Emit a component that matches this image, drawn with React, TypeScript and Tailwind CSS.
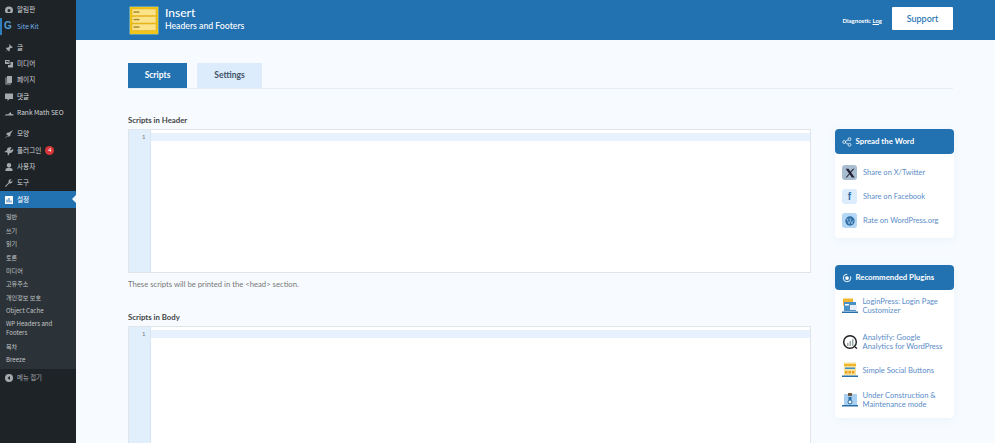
import React from "react";

const ko = { fontFamily: '"Noto Sans CJK KR","Noto Sans",sans-serif' };

const Dash = ({ d }: { d: string }) => (
  <svg viewBox="0 0 20 20" className="w-[10px] h-[10px] shrink-0 fill-[#a7aaad]"><path d={d} /></svg>
);

const icons: Record<string, string> = {
  gauge: "M10 3a8 8 0 0 0-8 8c0 2 .7 3.700 1.800 5h12.400A8 8 0 0 0 18 11a8 8 0 0 0-8-8zm0 5a3 3 0 0 1 3 3 3 3 0 0 1-6 0 3 3 0 0 1 3-3z",
  pin: "M10.400 2l7.200 7.200-1.600 1-2-.6-3 3 .6 3-1.500 1.500-3-3L2 19l4.600-5.700-3-3L5 8.800l3 .6 3-3-.6-2z",
  media: "M2 2h9v8H2zM13 6h5v11H8v-5h5zM4 4v3l2-2 3 3V4z",
  page: "M6 2h10v14H6zM3 5h2v12h9v2H3z",
  comment: "M3 3h14a1 1 0 0 1 1 1v9a1 1 0 0 1-1 1h-6l-4 4v-4H3a1 1 0 0 1-1-1V4a1 1 0 0 1 1-1z",
  chart: "M1 15l4-3 3 1 5-5 2 4 4 1v2H1z",
  brush: "M18 2l-8 5-3 0-3 4 4 1 1 4 4-3 0-3zM7 13l-5 5 1 0 5-4z",
  plugin: "M13 2l2 2-3 3 2 2 3-3 2 2-3 5-4 1-2 2-1 3-2-1 1-3-3-3-3 1-1-2 3-1 2-2 1-4z",
  user: "M10 2a4 4 0 1 1 0 9 4 4 0 0 1 0-9zM3 18v-3c0-2 3-3.500 7-3.500s7 1.500 7 3.500v3z",
  wrench: "M17 5l-3 3-2-2 3-3c-3-1-6 1-6 4 0 .7.200 1.300.400 1.800L2 16.500 3.500 18l7.200-7.400c.5.200 1 .4 1.800.4 3 0 5-3 4.500-6z",
  collapse: "M10 2a8 8 0 1 1 0 16 8 8 0 0 1 0-16zm2 4l-5 4 5 4z",
};

const Row = ({ icon, label }: { icon: string; label: string }) => (
  <div className="h-[16.300px] flex items-center pl-[4px] gap-[3px] text-[#d5d8db] text-[6.600px]">
    <Dash d={icons[icon]} />
    <span style={ko}>{label}</span>
  </div>
);

const Sub = ({ children, tall = false }: { children: React.ReactNode; tall?: boolean }) => (
  <div className={`px-[6px] py-[2.700px] text-[6.100px] text-[#c3c4c7] ${tall ? "leading-[8.500px]" : "leading-[8px]"}`} style={ko}>{children}</div>
);

const Sidebar = () => (
  <aside className="w-[76px] shrink-0 bg-[#1d2327] pt-[2px] flex flex-col">
    <Row icon="gauge" label="알림판" />
    <div className="h-[16.300px] flex items-center gap-[3px] text-[#72aee6] text-[6.600px] border-l-2 border-[#2f7fbd]">
      <span className="text-[10px] font-bold leading-none w-[12px] text-center text-[#4f9fd8]" style={{ fontFamily: '"Liberation Sans",sans-serif' }}>G</span>
      <span style={ko}>Site Kit</span>
    </div>
    <div className="h-[5px]" />
    <Row icon="pin" label="글" />
    <Row icon="media" label="미디어" />
    <Row icon="page" label="페이지" />
    <Row icon="comment" label="댓글" />
    <Row icon="chart" label="Rank Math SEO" />
    <div className="h-[5px]" />
    <Row icon="brush" label="모양" />
    <div className="h-[16.300px] flex items-center pl-[4px] gap-[3px] text-[#d5d8db] text-[6.600px]">
      <Dash d={icons.plugin} />
      <span style={ko}>플러그인</span>
      <span className="w-[9px] h-[9px] ml-[1px] rounded-full bg-[#d63638] text-white text-[5.500px] flex items-center justify-center">4</span>
    </div>
    <Row icon="user" label="사용자" />
    <Row icon="wrench" label="도구" />
    <div className="relative h-[16.500px] bg-[#2271b1] flex items-center pl-[4px] gap-[3px] text-white text-[6.600px] font-medium">
      <svg viewBox="0 0 20 20" className="w-[10px] h-[10px]"><rect x="2" y="2" width="16" height="16" rx="1" fill="#fff" /><path d="M6 15V9M10 15V6M14 15v-4" stroke="#2271b1" strokeWidth="2" /></svg>
      <span style={ko}>설정</span>
      <span className="absolute right-0 top-[4px] w-0 h-0 border-y-[4px] border-y-transparent border-r-[4px] border-r-[#f0f6fc]" />
    </div>
    <div className="bg-[#2c3338] pt-[3px] pb-[2px]">
      <Sub>일반</Sub>
      <Sub>쓰기</Sub>
      <Sub>읽기</Sub>
      <Sub>토론</Sub>
      <Sub>미디어</Sub>
      <Sub>고유주소</Sub>
      <Sub>개인정보 보호</Sub>
      <Sub>Object Cache</Sub>
      <Sub tall>WP Headers and Footers</Sub>
      <Sub>목차</Sub>
      <Sub>Breeze</Sub>
    </div>
    <div className="h-[22px] -mt-[2px] flex items-center pl-[4px] gap-[3px] text-[#a7aaad] text-[6.400px]">
      <Dash d={icons.collapse} />
      <span style={ko}>메뉴 접기</span>
    </div>
  </aside>
);

const Logo = () => (
  <svg viewBox="0 0 30 29" className="w-[30px] h-[29px] block shrink-0">
    <rect x="0.500" y="0.500" width="29" height="28" rx="1" fill="#f0c419" stroke="#5f9fb5" />
    {[3, 10.500, 18].map((y) => (
      <g key={y}>
        <rect x="3" y={y} width="24" height="6.500" fill="#fbe38a" stroke="#d9a514" strokeWidth="0.700" strokeDasharray="1 0.600" />
        <rect x="4.500" y={y + 2.300} width="6" height="1.500" fill="#a98a30" />
      </g>
    ))}
  </svg>
);

const Editor = ({ className }: { className: string }) => (
  <div className={`border border-[#e0e5ea] bg-white flex ${className}`}>
    <div className="w-[21.500px] shrink-0 bg-[#e1eefc] border-r border-[#d7e5f5] text-right pt-[3px] pr-[4px] text-[6px] leading-[8px] text-[#777]">1</div>
    <div className="flex-1 pt-[3px]"><div className="h-[8px] bg-[#e8f2fe]" /></div>
  </div>
);

const Card = ({ title, icon, children, className = "" }: { title: string; icon: React.ReactNode; children: React.ReactNode; className?: string }) => (
  <div className={`w-[119px] bg-white rounded-[4px] shadow-[0_2px_8px_rgba(90,140,190,0.08)] ${className}`}>
    <div className="h-[25px] bg-[#2271b1] rounded-[4px] flex items-center pl-[7px] gap-[4px] text-white text-[7.800px] font-bold">
      {icon}
      <span>{title}</span>
    </div>
    {children}
  </div>
);

const ShareRow = ({ bg, children, label }: { bg: string; children: React.ReactNode; label: string }) => (
  <div className="flex items-center gap-[6px] h-[24px] pl-[7.500px] text-[#5b8dc9] text-[7.500px]">
    <span className={`w-[15px] h-[15px] rounded-[3px] flex items-center justify-center ${bg}`}>{children}</span>
    <span>{label}</span>
  </div>
);

const PlugIcon = ({ kind }: { kind: number }) => {
  if (kind === 1)
    return (
      <svg viewBox="0 0 16 16" className="w-[16px] h-[16px] shrink-0">
        <circle cx="8" cy="8" r="6.300" fill="#fff" stroke="#222" strokeWidth="1.500" />
        <path d="M13 13l2 1.500" stroke="#222" strokeWidth="1.500" />
        <rect x="5" y="9" width="1.500" height="3" fill="#9aa" />
        <rect x="7.500" y="7" width="1.500" height="5" fill="#9aa" />
        <rect x="10" y="5" width="1.500" height="7" fill="#9aa" />
      </svg>
    );
  if (kind === 0)
    return (
      <svg viewBox="0 0 16 16" className="w-[16px] h-[16px] shrink-0">
        <rect x="1" y="0.500" width="10" height="7" fill="#f2b632" />
        <rect x="2" y="4" width="12" height="9" fill="#4a90c8" />
        <rect x="8" y="7" width="7" height="5" fill="#e8eef5" />
        <rect x="3" y="6" width="4" height="1.500" fill="#fff" />
        <rect x="0" y="13.500" width="16" height="1.500" fill="#2a6ea8" />
      </svg>
    );
  if (kind === 2)
    return (
      <svg viewBox="0 0 16 16" className="w-[16px] h-[16px] shrink-0">
        <rect x="2" y="0.500" width="12" height="13" fill="#f8e19a" />
        <rect x="2" y="2" width="12" height="2" fill="#f0b429" />
        <rect x="3" y="5.500" width="10" height="1.500" fill="#3d8fcc" />
        <rect x="3" y="9" width="2.500" height="2.500" fill="#f0a020" />
        <rect x="6.500" y="9" width="2.500" height="2.500" fill="#f0a020" />
        <rect x="10" y="9" width="2.500" height="2.500" fill="#f0a020" />
        <rect x="0" y="13.500" width="16" height="1.500" fill="#2a6ea8" />
      </svg>
    );
  return (
    <svg viewBox="0 0 16 16" className="w-[16px] h-[16px] shrink-0">
      <rect x="2" y="2" width="13" height="11" fill="#a9d0f0" />
      <rect x="6" y="1" width="4" height="3" fill="#6b5b45" />
      <rect x="6.500" y="5" width="3" height="7" fill="#2a6ea8" />
      <circle cx="8" cy="10" r="2" fill="#fff" stroke="#2a6ea8" />
      <rect x="0" y="13" width="16" height="1.500" fill="#2a6ea8" />
    </svg>
  );
};

const Plug = ({ kind, children, h }: { kind: number; children: React.ReactNode; h: string }) => (
  <div className={`flex items-center gap-[5px] pl-[7px] pr-[4px] text-[#5b8dc9] text-[7.600px] leading-[9px] ${h}`}>
    <PlugIcon kind={kind} />
    <span>{children}</span>
  </div>
);

export default function App() {
  return (
    <div className="w-[995px] h-[443px] overflow-hidden flex bg-[#f7fbff]" style={{ fontFamily: 'Lato,"Noto Sans",sans-serif' }}>
      <Sidebar />
      <main className="flex-1 min-w-0">
        <header className="h-[40px] bg-[#2271b1] flex items-center pl-[53px] pr-[42px]">
          <Logo />
          <div className="ml-[6px] text-white -mt-[3px]">
            <div className="text-[12px] leading-[14px] font-medium">Insert</div>
            <div className="text-[8.700px] leading-[12px] font-medium">Headers and Footers</div>
          </div>
          <div className="ml-auto text-white text-[6px] font-bold mr-[10px]">
            Diagnostic <span className="underline">Log</span>
          </div>
          <div className="w-[61px] h-[23px] -mt-[3px] bg-white rounded-[1px] text-[#2271b1] text-[9px] font-medium flex items-center justify-center">Support</div>
        </header>

        <div className="pl-[52px] pr-[42px]">
          <nav className="mt-[23px] flex gap-[10px] border-b border-[#e6edf4] h-[26px]">
            <div className="w-[59px] h-[25px] bg-[#2271b1] text-white text-[8.500px] font-bold flex items-center justify-center">Scripts</div>
            <div className="w-[65px] h-[25px] bg-[#dcecfd] text-[#3f5266] text-[8.500px] font-bold flex items-center justify-center">Settings</div>
          </nav>

          <div className="flex mt-[25px]">
            <div className="w-[683px] shrink-0">
              <div className="text-[7.800px] leading-[10px] font-bold text-[#444] mt-[1px]">Scripts in Header</div>
              <Editor className="h-[144px] mt-[4px]" />
              <div className="text-[7.700px] leading-[10px] text-[#777] mt-[6px]">These scripts will be printed in the &lt;head&gt; section.</div>
              <div className="text-[7.800px] leading-[10px] font-bold text-[#444] mt-[23px]">Scripts in Body</div>
              <Editor className="h-[144px] mt-[4px]" />
            </div>
            <div className="ml-[23.500px] pt-[15px]">
              <Card
                title="Spread the Word"
                icon={
                  <svg viewBox="0 0 16 16" className="w-[10px] h-[10px] fill-none stroke-white" strokeWidth="1.200">
                    <circle cx="3.500" cy="8" r="2.300" /><circle cx="12" cy="3.500" r="2.300" /><circle cx="12" cy="12.500" r="2.300" /><path d="M5.500 7l4.500-2.500M5.500 9l4.500 2.500" />
                  </svg>
                }
                className="h-[109px]"
              >
                <div className="pt-[6.500px]">
                  <ShareRow bg="bg-[#a9bdd0]" label="Share on X/Twitter">
                    <svg viewBox="0 0 16 16" className="w-[10px] h-[10px] fill-[#223]"><path d="M1 1h4.500l3.300 4.500L12.800 1H15L9.800 7l5.700 8H11L7.400 10 3 15H1l5.500-6.300z" /></svg>
                  </ShareRow>
                  <ShareRow bg="bg-[#dcecfd]" label="Share on Facebook">
                    <span className="text-[#2f6ea5] text-[10px] font-bold leading-none" style={{ fontFamily: '"Liberation Sans",sans-serif' }}>f</span>
                  </ShareRow>
                  <ShareRow bg="bg-[#b5d7f5]" label="Rate on WordPress.org">
                    <svg viewBox="0 0 16 16" className="w-[10px] h-[10px]"><circle cx="8" cy="8" r="7.500" fill="#2f6ea5" /><path d="M2.500 5h3M3.500 5l3 8 1.700-5M6.800 5h3.400M8 5l3 8 2-6" stroke="#b5d7f5" strokeWidth="1" fill="none" /></svg>
                  </ShareRow>
                </div>
              </Card>
              <Card
                title="Recommended Plugins"
                icon={
                  <svg viewBox="0 0 16 16" className="w-[10px] h-[10px]"><circle cx="8" cy="8" r="6" fill="none" stroke="#fff" strokeWidth="1.500" strokeDasharray="28 6" /><circle cx="8" cy="8" r="3" fill="#fff" /></svg>
                }
                className="mt-[27px] h-[153px]"
              >
                <Plug kind={0} h="h-[31px] pt-[1px]">LoginPress: Login Page Customizer</Plug>
                <Plug kind={1} h="h-[37px] pt-[4px]">Analytify: Google Analytics for WordPress</Plug>
                <Plug kind={2} h="h-[24px]">Simple Social Buttons</Plug>
                <Plug kind={3} h="h-[35px]">Under Construction &amp; Maintenance mode</Plug>
              </Card>
            </div>
          </div>
        </div>
      </main>
    </div>
  );
}
